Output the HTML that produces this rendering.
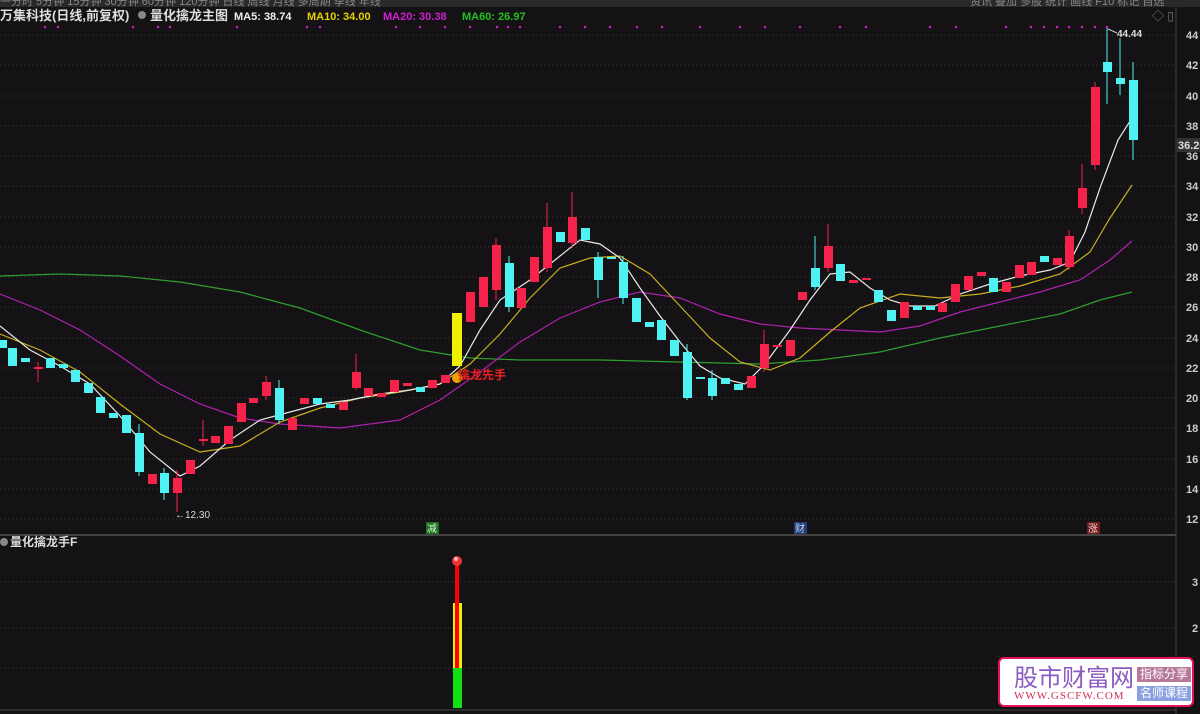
<!DOCTYPE html><html><head><meta charset="utf-8"><style>
body{margin:0;width:1200px;height:714px;background:#141214;overflow:hidden;font-family:"Liberation Sans","Noto Sans CJK SC",sans-serif}
svg{position:absolute;left:0;top:0}
.r{fill:#f5234a}.c{fill:#4ef2f2}
text{font-family:"Liberation Sans","Noto Sans CJK SC",sans-serif}
</style></head><body>
<svg width="1200" height="714" viewBox="0 0 1200 714">
<rect x="0" y="0" width="1200" height="7" fill="#2a282a"/>
<text x="0" y="5" font-size="11" fill="#888">一分时 5分钟 15分钟 30分钟 60分钟 120分钟 日线 周线 月线 多周期 季线 年线</text>
<text x="970" y="5" font-size="11" fill="#888">资讯 叠加 多股 统计 画线 F10 标记 自选</text>
<line x1="1176" y1="7" x2="1176" y2="714" stroke="#444"/>
<g stroke="#3a3838" stroke-dasharray="1,3">
<line x1="0" x2="1176" y1="35" y2="35"/><line x1="0" x2="1176" y1="65" y2="65"/><line x1="0" x2="1176" y1="96" y2="96"/><line x1="0" x2="1176" y1="126" y2="126"/><line x1="0" x2="1176" y1="156" y2="156"/><line x1="0" x2="1176" y1="186" y2="186"/><line x1="0" x2="1176" y1="217" y2="217"/><line x1="0" x2="1176" y1="247" y2="247"/><line x1="0" x2="1176" y1="277" y2="277"/><line x1="0" x2="1176" y1="307" y2="307"/><line x1="0" x2="1176" y1="338" y2="338"/><line x1="0" x2="1176" y1="368" y2="368"/><line x1="0" x2="1176" y1="398" y2="398"/><line x1="0" x2="1176" y1="428" y2="428"/><line x1="0" x2="1176" y1="459" y2="459"/><line x1="0" x2="1176" y1="489" y2="489"/><line x1="0" x2="1176" y1="519" y2="519"/>
<line x1="0" x2="1176" y1="582" y2="582"/><line x1="0" x2="1176" y1="628" y2="628"/><line x1="0" x2="1176" y1="668" y2="668"/>
</g>
<g font-size="11" fill="#ccc" font-weight="bold">
<text x="1186" y="39">44</text><text x="1186" y="69">42</text><text x="1186" y="100">40</text><text x="1186" y="130">38</text><text x="1186" y="190">34</text><text x="1186" y="221">32</text><text x="1186" y="251">30</text><text x="1186" y="281">28</text><text x="1186" y="311">26</text><text x="1186" y="342">24</text><text x="1186" y="372">22</text><text x="1186" y="402">20</text><text x="1186" y="432">18</text><text x="1186" y="463">16</text><text x="1186" y="493">14</text><text x="1186" y="523">12</text>
<text x="1186" y="160">36</text><text x="1192" y="586">3</text><text x="1192" y="632">2</text>
</g>
<rect x="1177" y="138" width="23" height="14" fill="#333"/><text x="1178" y="149" font-size="11" fill="#ddd" font-weight="bold">36.20</text>
<line x1="0" y1="535" x2="1176" y2="535" stroke="#444" stroke-width="2"/>
<line x1="0" y1="710" x2="1176" y2="710" stroke="#444"/>
<text x="0" y="20" font-size="13" fill="#ddd" font-weight="bold">万集科技(日线,前复权)</text>
<circle cx="142" cy="15" r="4" fill="#888"/>
<text x="150" y="20" font-size="13" fill="#ddd" font-weight="bold">量化擒龙主图</text>
<text x="234" y="20" font-size="11" font-weight="bold" fill="#eee">MA5: 38.74</text>
<text x="307" y="20" font-size="11" font-weight="bold" fill="#e8d000">MA10: 34.00</text>
<text x="383" y="20" font-size="11" font-weight="bold" fill="#d020d0">MA20: 30.38</text>
<text x="462" y="20" font-size="11" font-weight="bold" fill="#20c020">MA60: 26.97</text>
<g fill="#c020c0"><circle cx="45" cy="27" r="1.3"/><circle cx="58" cy="27" r="1.3"/><circle cx="133" cy="27" r="1.3"/><circle cx="158" cy="27" r="1.3"/><circle cx="170" cy="27" r="1.3"/><circle cx="237" cy="27" r="1.3"/><circle cx="307" cy="27" r="1.3"/><circle cx="320" cy="27" r="1.3"/><circle cx="396" cy="27" r="1.3"/><circle cx="420" cy="27" r="1.3"/><circle cx="445" cy="27" r="1.3"/><circle cx="470" cy="27" r="1.3"/><circle cx="497" cy="27" r="1.3"/><circle cx="508" cy="27" r="1.3"/><circle cx="520" cy="27" r="1.3"/><circle cx="560" cy="27" r="1.3"/><circle cx="585" cy="27" r="1.3"/><circle cx="610" cy="27" r="1.3"/><circle cx="637" cy="27" r="1.3"/><circle cx="662" cy="27" r="1.3"/><circle cx="700" cy="27" r="1.3"/><circle cx="740" cy="27" r="1.3"/><circle cx="765" cy="27" r="1.3"/><circle cx="800" cy="27" r="1.3"/><circle cx="840" cy="27" r="1.3"/><circle cx="866" cy="27" r="1.3"/><circle cx="930" cy="27" r="1.3"/><circle cx="956" cy="27" r="1.3"/><circle cx="1006" cy="27" r="1.3"/><circle cx="1031" cy="27" r="1.3"/><circle cx="1044" cy="27" r="1.3"/><circle cx="1057" cy="27" r="1.3"/><circle cx="1069" cy="27" r="1.3"/><circle cx="1082" cy="27" r="1.3"/><circle cx="1095" cy="27" r="1.3"/><circle cx="1107" cy="27" r="1.3"/></g>
<text x="1152" y="20" font-size="12" fill="#777">◇ ▯</text>
<!-- MA60 -->
<polyline fill="none" stroke="#2ea02e" stroke-width="1.2" points="0,276 60,274 120,276 180,282 240,292 300,308 360,330 420,350 470,358 520,360 600,360 680,362 760,364 820,360 880,352 940,338 1000,326 1060,314 1100,300 1132,292"/>
<!-- MA20 -->
<polyline fill="none" stroke="#b020b0" stroke-width="1.2" points="0,294 40,310 80,330 120,356 160,384 200,404 240,418 280,424 340,428 400,420 440,400 480,372 520,342 560,318 600,302 640,292 680,298 720,314 760,324 800,328 840,330 880,332 920,326 960,312 1000,302 1040,292 1080,280 1110,260 1132,241"/>
<!-- MA10 -->
<polyline fill="none" stroke="#c8b020" stroke-width="1.2" points="0,334 40,350 80,372 120,404 160,434 200,452 240,446 280,422 320,408 360,398 400,392 440,384 470,364 500,334 530,298 560,268 590,258 620,256 650,274 680,306 710,338 740,362 770,370 800,358 830,332 860,308 900,294 940,298 980,294 1020,286 1060,274 1090,252 1110,218 1132,185"/>
<!-- MA5 -->
<polyline fill="none" stroke="#e8e8e8" stroke-width="1.2" points="0,326 30,350 60,366 90,384 120,416 150,452 180,476 200,466 230,440 260,420 290,412 320,404 350,400 380,394 410,390 440,384 460,366 480,330 500,300 530,280 555,260 580,240 600,244 620,258 640,288 660,316 680,342 700,366 720,378 745,384 765,364 790,330 810,300 830,274 850,272 870,288 890,300 910,306 935,306 960,294 990,284 1020,276 1050,270 1070,262 1085,232 1100,188 1118,140 1132,118"/>
<!-- wicks -->
<g stroke="#f5234a" stroke-width="1"><line x1="38" y1="362" x2="38" y2="382"/><line x1="177" y1="470" x2="177" y2="512"/><line x1="356" y1="354" x2="356" y2="390"/><line x1="496" y1="238" x2="496" y2="300"/><line x1="547" y1="203" x2="547" y2="272"/><line x1="572" y1="192" x2="572" y2="248"/><line x1="828" y1="224" x2="828" y2="272"/><line x1="1082" y1="164" x2="1082" y2="214"/><line x1="1095" y1="82" x2="1095" y2="170"/><line x1="764" y1="330" x2="764" y2="372"/><line x1="1069" y1="230" x2="1069" y2="270"/><line x1="203" y1="420" x2="203" y2="446"/><line x1="266" y1="376" x2="266" y2="400"/></g>
<g stroke="#4ef2f2" stroke-width="1"><line x1="1107" y1="28" x2="1107" y2="104"/><line x1="1120" y1="38" x2="1120" y2="95"/><line x1="1133" y1="62" x2="1133" y2="160"/><line x1="139" y1="424" x2="139" y2="476"/><line x1="164" y1="468" x2="164" y2="500"/><line x1="598" y1="252" x2="598" y2="298"/><line x1="623" y1="256" x2="623" y2="304"/><line x1="687" y1="344" x2="687" y2="400"/><line x1="815" y1="236" x2="815" y2="290"/><line x1="279" y1="380" x2="279" y2="424"/><line x1="509" y1="256" x2="509" y2="312"/><line x1="712" y1="370" x2="712" y2="400"/></g>
<g class="c">
<rect x="-2" y="340" width="9" height="8"/><rect x="8" y="348" width="9" height="18"/><rect x="21" y="358" width="9" height="4"/><rect x="46" y="358" width="9" height="10"/><rect x="59" y="364" width="9" height="4"/><rect x="71" y="370" width="9" height="12"/><rect x="84" y="383" width="9" height="10"/><rect x="96" y="397" width="9" height="16"/><rect x="109" y="413" width="9" height="5"/><rect x="122" y="415" width="9" height="18"/><rect x="135" y="433" width="9" height="39"/><rect x="160" y="473" width="9" height="20"/><rect x="275" y="388" width="9" height="32"/><rect x="313" y="398" width="9" height="6"/><rect x="326" y="404" width="9" height="4"/><rect x="416" y="387" width="9" height="5"/><rect x="505" y="263" width="9" height="44"/><rect x="556" y="232" width="9" height="10"/><rect x="581" y="228" width="9" height="12"/><rect x="594" y="257" width="9" height="23"/><rect x="607" y="257" width="9" height="2"/><rect x="619" y="262" width="9" height="36"/><rect x="632" y="298" width="9" height="24"/><rect x="645" y="322" width="9" height="5"/><rect x="657" y="320" width="9" height="20"/><rect x="670" y="340" width="9" height="16"/><rect x="683" y="352" width="9" height="46"/><rect x="696" y="377" width="9" height="2"/><rect x="708" y="378" width="9" height="18"/><rect x="721" y="378" width="9" height="6"/><rect x="734" y="384" width="9" height="6"/><rect x="811" y="268" width="9" height="19"/><rect x="836" y="264" width="9" height="17"/><rect x="874" y="290" width="9" height="12"/><rect x="887" y="310" width="9" height="11"/><rect x="913" y="306" width="9" height="4"/><rect x="926" y="306" width="9" height="4"/><rect x="989" y="278" width="9" height="14"/><rect x="1040" y="256" width="9" height="6"/><rect x="1103" y="62" width="9" height="10"/><rect x="1116" y="78" width="9" height="6"/><rect x="1129" y="80" width="9" height="60"/>
</g>
<g class="r">
<rect x="34" y="367" width="9" height="2"/><rect x="148" y="474" width="9" height="10"/><rect x="173" y="478" width="9" height="15"/><rect x="186" y="460" width="9" height="14"/><rect x="199" y="439" width="9" height="2"/><rect x="211" y="436" width="9" height="7"/><rect x="224" y="426" width="9" height="18"/><rect x="237" y="403" width="9" height="19"/><rect x="249" y="398" width="9" height="5"/><rect x="262" y="382" width="9" height="14"/><rect x="288" y="418" width="9" height="12"/><rect x="300" y="398" width="9" height="6"/><rect x="339" y="402" width="9" height="8"/><rect x="352" y="372" width="9" height="16"/><rect x="364" y="388" width="9" height="8"/><rect x="377" y="393" width="9" height="4"/><rect x="390" y="380" width="9" height="12"/><rect x="403" y="383" width="9" height="3"/><rect x="428" y="380" width="9" height="8"/><rect x="441" y="375" width="9" height="8"/><rect x="466" y="292" width="9" height="30"/><rect x="479" y="277" width="9" height="30"/><rect x="492" y="245" width="9" height="45"/><rect x="517" y="288" width="9" height="20"/><rect x="530" y="257" width="9" height="25"/><rect x="543" y="227" width="9" height="41"/><rect x="568" y="217" width="9" height="26"/><rect x="747" y="376" width="9" height="12"/><rect x="760" y="344" width="9" height="24"/><rect x="773" y="345" width="9" height="2"/><rect x="786" y="340" width="9" height="16"/><rect x="798" y="292" width="9" height="8"/><rect x="824" y="246" width="9" height="22"/><rect x="849" y="280" width="9" height="3"/><rect x="862" y="278" width="9" height="2"/><rect x="900" y="302" width="9" height="16"/><rect x="938" y="303" width="9" height="9"/><rect x="951" y="284" width="9" height="18"/><rect x="964" y="276" width="9" height="14"/><rect x="977" y="272" width="9" height="4"/><rect x="1002" y="282" width="9" height="10"/><rect x="1015" y="265" width="9" height="13"/><rect x="1027" y="262" width="9" height="13"/><rect x="1053" y="258" width="9" height="7"/><rect x="1065" y="236" width="9" height="31"/><rect x="1078" y="188" width="9" height="20"/><rect x="1091" y="87" width="9" height="78"/>
</g>
<rect x="452" y="313" width="10" height="53" fill="#f0f000"/>
<circle cx="457" cy="378" r="5" fill="#f0a000"/>
<text x="458" y="379" font-size="12" font-weight="bold" fill="#f02020">擒龙先手</text>
<text x="175" y="518" font-size="10" fill="#ddd">←12.30</text>
<text x="1117" y="37" font-size="10" fill="#ddd" font-weight="bold">44.44</text>
<line x1="1108" y1="29" x2="1117" y2="33" stroke="#ccc"/>
<rect x="426" y="522" width="13" height="12" fill="#1d6e1d"/><text x="427" y="532" font-size="10" fill="#cfc">减</text>
<rect x="794" y="522" width="13" height="12" fill="#1d3e6e"/><text x="795" y="532" font-size="10" fill="#ccf">财</text>
<rect x="1087" y="522" width="13" height="12" fill="#6e1d1d"/><text x="1088" y="532" font-size="10" fill="#fcc">涨</text>
<circle cx="4" cy="542" r="4" fill="#888"/>
<text x="10" y="546" font-size="12" fill="#ddd" font-weight="bold">量化擒龙手F</text>
<rect x="455" y="562" width="4" height="42" fill="#f00"/>
<circle cx="457" cy="561" r="5" fill="#e33"/><circle cx="456" cy="559" r="2" fill="#fbb"/>
<rect x="453" y="603" width="9" height="65" fill="#f0f000"/>
<rect x="455" y="603" width="4" height="65" fill="#f00"/>
<rect x="453" y="668" width="9" height="40" fill="#10e010"/>
</svg>
<div style="position:absolute;left:998px;top:657px;width:196px;height:50px;background:#fff;border:2px solid #e8105a;border-radius:6px;box-sizing:border-box">
<div style="position:absolute;left:14px;top:4px;font-size:24px;color:#8a5ac0;font-family:'Noto Sans CJK SC',sans-serif;line-height:26px">股市财富网</div>
<div style="position:absolute;left:14px;top:31px;font-size:11px;color:#d03050;font-family:'Liberation Serif',serif;letter-spacing:1px">WWW.GSCFW.COM</div>
<div style="position:absolute;left:137px;top:8px;width:54px;height:15px;background:#b87898;color:#fff;font-size:12px;line-height:15px;text-align:center">指标分享</div>
<div style="position:absolute;left:137px;top:27px;width:54px;height:15px;background:#8aa0e0;color:#fff;font-size:12px;line-height:15px;text-align:center">名师课程</div>
</div>
</body></html>
